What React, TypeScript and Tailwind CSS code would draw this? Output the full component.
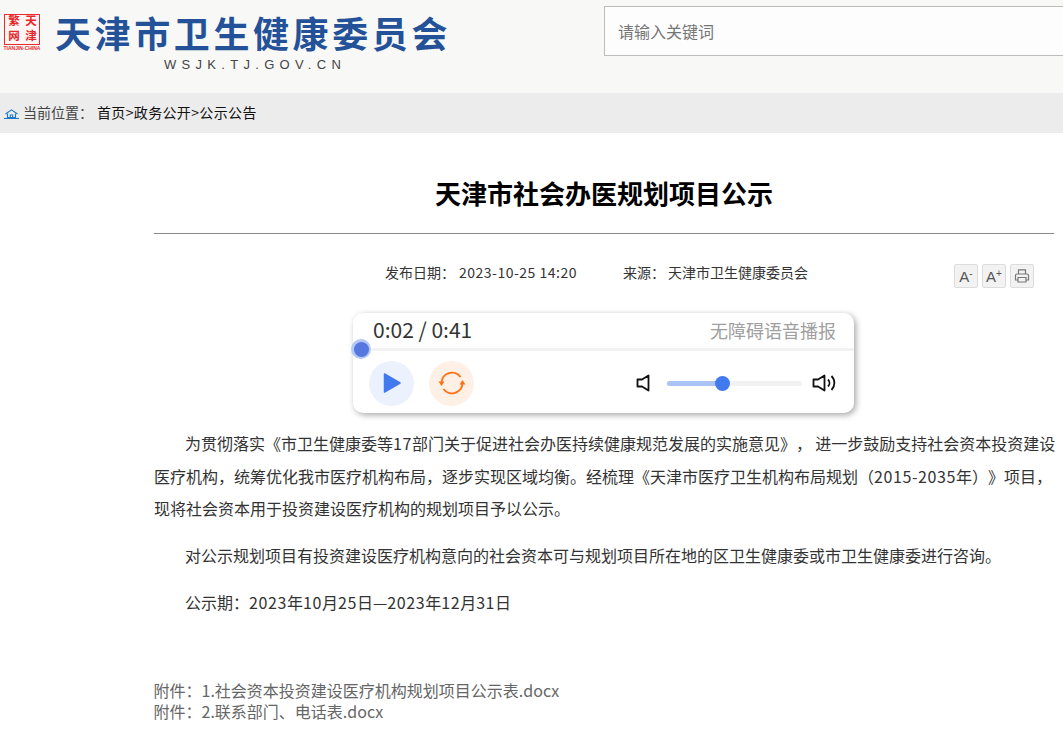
const cjk = { fontFamily: '"Noto Sans CJK SC", sans-serif' };

function HomeIcon() {
  return (
    <svg className="mt-[3px]" width="15" height="10" viewBox="0 0 15 10" fill="none" stroke="#1e78c8" strokeWidth="1.1">
      <path d="M1.5 5 7.5 0.8 13.5 5" />
      <path d="M3.5 4.5v4h8v-4" />
      <path d="M6.3 8.5V6h2.4v2.5" />
      <path d="M0 9.5h15" />
    </svg>
  );
}

function ToolBtn({ children }: { children: React.ReactNode }) {
  return (
    <div className="w-6 h-6 flex items-center justify-center rounded-[2px] border border-[#dcdcdc] bg-[#f2f2f2]">
      {children}
    </div>
  );
}

function Num({ children }: { children: React.ReactNode }) {
  return <span className="tracking-[0.6px]">{children}</span>;
}

function Seal() {
  return (
    <div className="ml-1 mt-[14px] w-9 shrink-0 flex flex-col items-center">
      <div className="w-9 h-[31px] bg-[#fff5f5] border border-[#ea2a2e] flex justify-center font-bold text-[#e8262a] text-[11.5px] leading-[17px] tracking-[3px]">
        <div className="[writing-mode:vertical-rl]">繁网</div>
        <div className="[writing-mode:vertical-rl]">天津</div>
      </div>
      <div className="text-[5px] leading-[6px] font-bold text-[#ea2a2e] whitespace-nowrap" style={{ fontFamily: '"Liberation Sans", sans-serif' }}>TIANJIN·CHINA</div>
    </div>
  );
}

export default function App() {
  return (
    <div className="w-[1063px] h-[732px] overflow-hidden bg-white text-[#333] [text-spacing-trim:space-all]" style={cjk}>
      <header className="h-[93px] bg-[#f8f8f7] flex">
        <div className="w-[604px] flex items-start">
          <Seal />
          <div className="ml-[15px] flex flex-col items-start">
            <div className="mt-[10px] text-[36px] leading-[44px] font-bold text-[#245299] tracking-[3.6px] whitespace-nowrap">天津市卫生健康委员会</div>
            <div className="ml-[109px] mt-[3px] text-[13px] leading-4 tracking-[5.3px] text-[#444] whitespace-nowrap" style={{ fontFamily: '"Liberation Sans", sans-serif' }}>WSJK.TJ.GOV.CN</div>
          </div>
        </div>
        <div className="mt-[6px] h-[50px] flex-1 border border-r-0 border-[#bcbcbc] bg-[#fdfdfd] flex items-center pl-[13px] text-base text-[#757575]">请输入关键词</div>
      </header>

      <nav className="h-10 bg-[#ececec] flex items-center pl-[4px] pb-[2px] text-sm">
        <HomeIcon />
        <span className="ml-[4px] text-[#444]">当前位置：</span>
        <span className="ml-1 text-[#111] tracking-[0.35px]">首页&gt;政务公开&gt;公示公告</span>
      </nav>

      <main className="pl-[154px] pr-[9px]">
        <h1 className="pt-[42px] pb-[22px] border-b border-[#888] text-center text-[26px] leading-9 font-bold text-black">天津市社会办医规划项目公示</h1>

        <div className="relative mt-[26px] h-6 flex text-sm leading-6 text-[#333] whitespace-nowrap">
          <span className="ml-[231px]">发布日期：</span>
          <span className="ml-1 tracking-[0.5px]">2023-10-25 14:20</span>
          <span className="ml-[46px]">来源：</span>
          <span className="ml-[3px]">天津市卫生健康委员会</span>
          <div className="absolute right-5 top-1 flex gap-1">
            <ToolBtn><span className="text-[15px] leading-none text-[#555]" style={{ fontFamily: '"Liberation Sans", sans-serif' }}>A<sup className="text-[10px]">-</sup></span></ToolBtn>
            <ToolBtn><span className="text-[15px] leading-none text-[#555]" style={{ fontFamily: '"Liberation Sans", sans-serif' }}>A<sup className="text-[10px]">+</sup></span></ToolBtn>
            <ToolBtn>
              <svg width="16" height="16" viewBox="0 0 16 16" fill="none" stroke="#777" strokeWidth="1.2">
                <path d="M4.5 6V1.8h7V6M4 12H1.5V7.5a1.5 1.5 0 0 1 1.5-1.5h10a1.5 1.5 0 0 1 1.5 1.5V12H12" />
                <path d="M4 9.5h8v4.5H4z" />
              </svg>
            </ToolBtn>
          </div>
        </div>

        <div className="relative mt-[29px] ml-[199px] w-[501px] h-[100px] rounded-[10px] bg-white shadow-[2px_2px_6px_rgba(0,0,0,0.35)]">
          <div className="h-[35px] pb-[1px] flex items-center justify-between pl-[20px] pr-[18px]">
            <span className="text-[21px]">0:02 / 0:41</span>
            <span className="text-lg text-[#a0a0a0]">无障碍语音播报</span>
          </div>
          <div className="h-[3px] bg-[#f2f2f2]" />
          <div className="absolute left-[-2px] top-[26px] w-5 h-5 rounded-full bg-[#b3c8f5] flex items-center justify-center">
            <div className="w-[15px] h-[15px] rounded-full bg-[#5578e0]" />
          </div>
          <div className="flex items-center pl-4 pr-[18px] pt-[2px] h-[62px]">
            <div className="w-[45px] h-[45px] rounded-full bg-[#ecf1fe] flex items-center justify-center">
              <svg width="20" height="22" viewBox="0 0 20 22"><path d="M2.5 2 18 11 2.5 20Z" fill="#4179ee" stroke="#4179ee" strokeWidth="1.5" strokeLinejoin="round" /></svg>
            </div>
            <div className="ml-[15px] w-[45px] h-[45px] rounded-full bg-[#fff0e6] flex items-center justify-center">
              <svg width="30" height="30" viewBox="0 0 30 30" fill="none" stroke="#ff7014" strokeWidth="2">
                <path d="M4.5 15A10.5 10.5 0 0 1 23.5 9M25.5 15A10.5 10.5 0 0 1 6.5 21" />
                <path d="M1.5 13.5h6L4.5 18Z M22.5 16.5h6L25.5 12Z" fill="#ff7014" stroke="none" />
              </svg>
            </div>
            <svg className="ml-[162px]" width="14" height="18" viewBox="0 0 14 18" fill="none" stroke="#111" strokeWidth="1.8"><path d="M12.5 1.5v15L6 12.5H1.5v-7H6Z" strokeLinejoin="round" /></svg>
            <div className="ml-[17px] relative w-[135px] h-[5px] rounded-full bg-[#f2f2f2]">
              <div className="w-[55px] h-full rounded-full bg-[#abc2f6]" />
              <div className="absolute left-[48px] top-[-5px] w-[15px] h-[15px] rounded-full bg-[#4179ee]" />
            </div>
            <svg className="ml-[10px]" width="24" height="20" viewBox="0 0 24 20" fill="none" stroke="#111" strokeWidth="1.8"><path d="M12.5 2.5v15L6 13.5H1.5v-7H6Z" strokeLinejoin="round" /><path d="M16 6.5a5 5 0 0 1 0 7M19.5 3a10 10 0 0 1 0 14" /></svg>
          </div>
        </div>

        <article className="mt-[14px] text-base leading-[32.5px] text-[#333] whitespace-nowrap">
          <p className="indent-[31px]">
            为贯彻落实《市卫生健康委等<Num>17</Num>部门关于促进社会办医持续健康规范发展的实施意见》，{"\u2009"}进一步鼓励支持社会资本投资建设<br />
            <span className="block indent-0">医疗机构，统筹优化我市医疗机构布局，逐步实现区域均衡。经梳理《天津市医疗卫生机构布局规划（<Num>2015-2035</Num>年）》项目，</span>
            <span className="block indent-0">现将社会资本用于投资建设医疗机构的规划项目予以公示。</span>
          </p>
          <p className="mt-[14.5px] indent-[31px]">对公示规划项目有投资建设医疗机构意向的社会资本可与规划项目所在地的区卫生健康委或市卫生健康委进行咨询。</p>
          <p className="mt-[14.5px] indent-[31px]">公示期：<Num>2023</Num>年<Num>10</Num>月<Num>25</Num>日—<Num>2023</Num>年<Num>12</Num>月<Num>31</Num>日</p>
        </article>

        <div className="mt-[61px] -ml-[0.5px] text-base leading-[21px] text-[#666]">
          <div>附件：1.社会资本投资建设医疗机构规划项目公示表.docx</div>
          <div>附件：2.联系部门、电话表.docx</div>
        </div>
      </main>
    </div>
  );
}
